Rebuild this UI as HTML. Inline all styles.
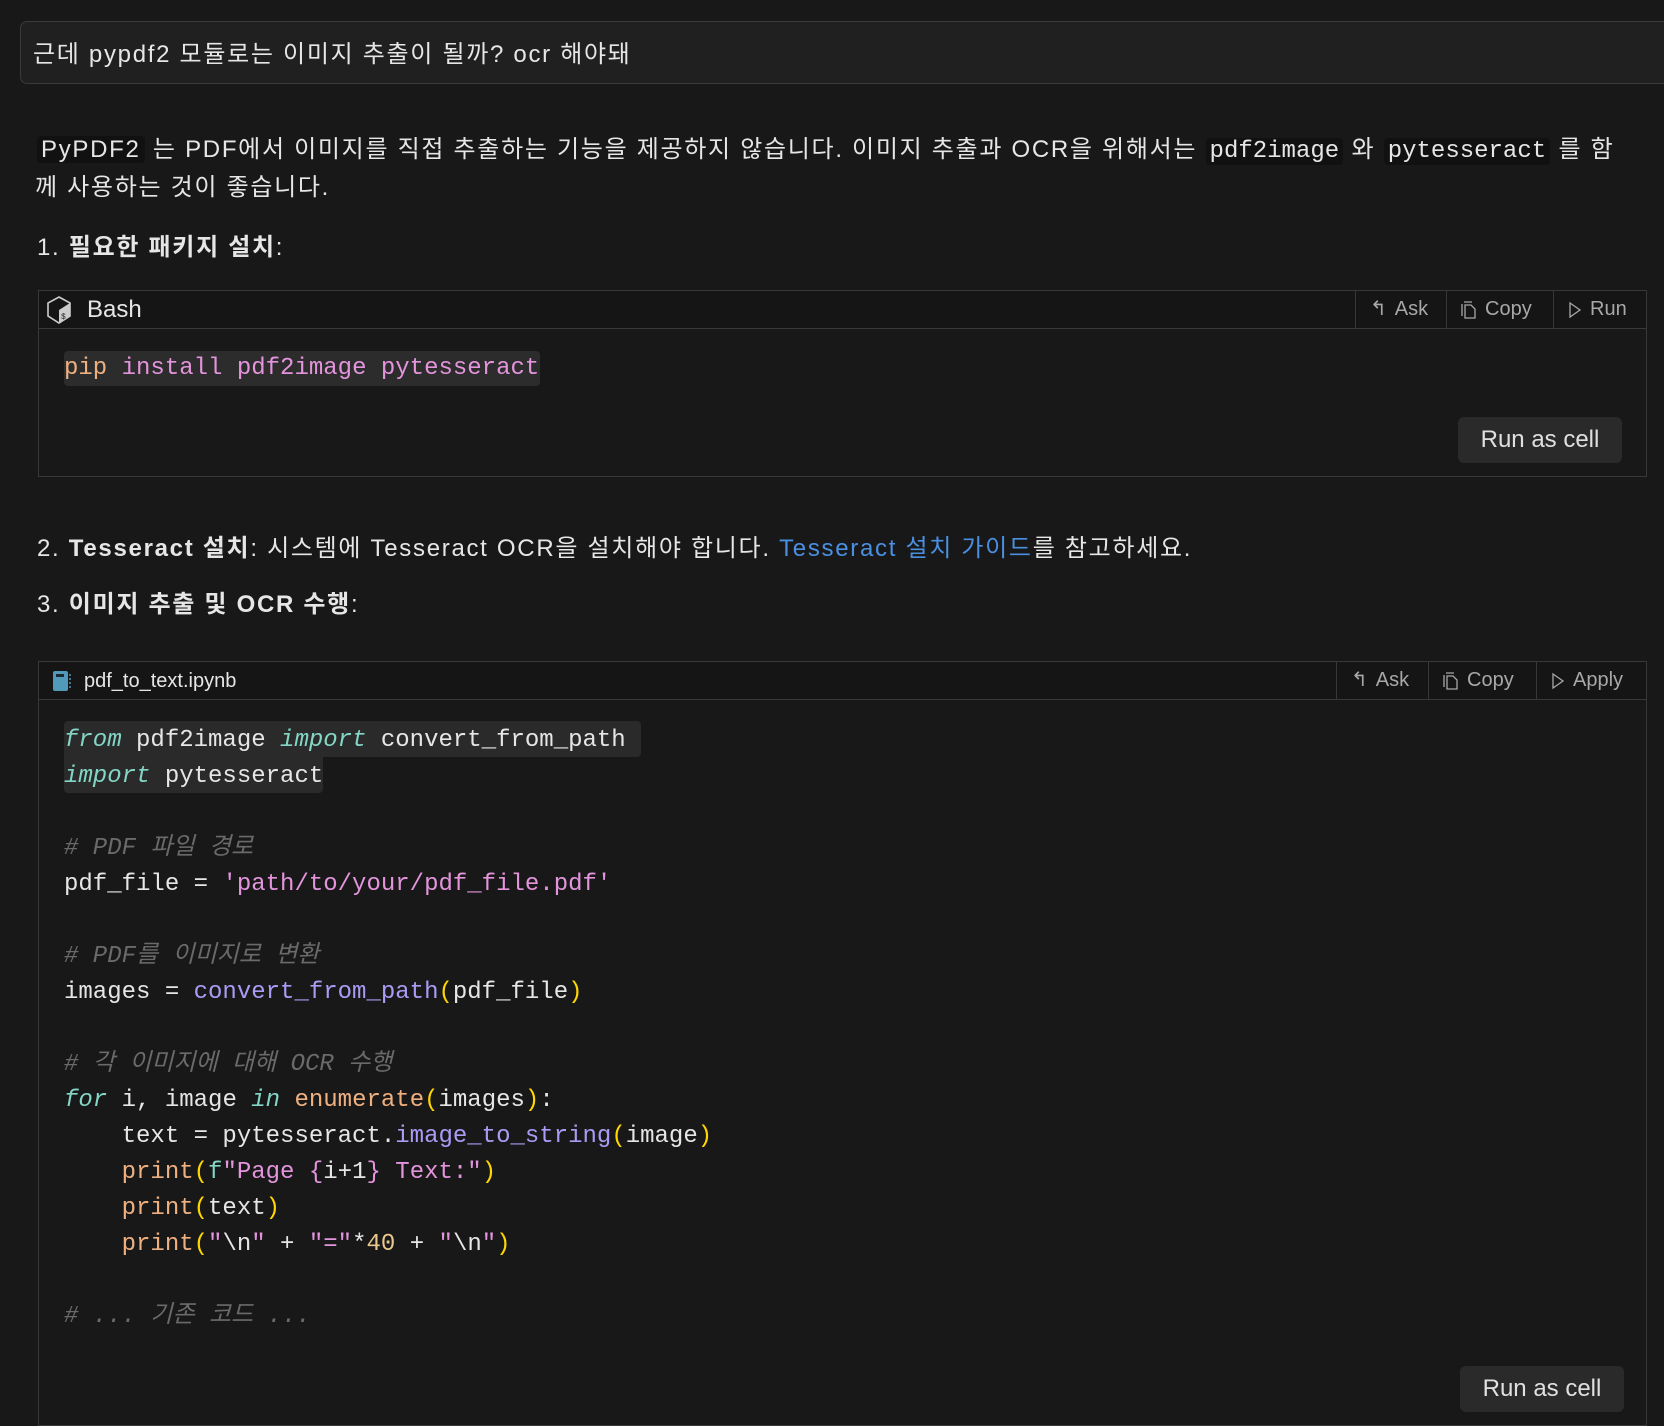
<!DOCTYPE html>
<html><head><meta charset="utf-8"><style>
*{margin:0;padding:0;box-sizing:border-box}
body{width:1664px;height:1426px;background:#181818;color:#e6e6e6;font-family:"Liberation Sans","Noto Sans CJK KR",sans-serif;position:relative;overflow:hidden}
.abs{position:absolute}
.t{font-size:24px;white-space:nowrap;line-height:36px;letter-spacing:1.7px}
.mono{font-family:"Liberation Mono","Noto Sans CJK KR",monospace}
.ic{font-family:"Liberation Mono","Noto Sans CJK KR",monospace;background:#111;padding:0 4px;border-radius:4px;font-size:24px;letter-spacing:0}
.block{position:absolute;left:38px;width:1609px;border:1.5px solid #383838;background:#181818}
.hdr{position:absolute;left:0;right:0;top:0;height:38px;border-bottom:1.5px solid #383838;background:#151515}
.btn{position:absolute;top:0;height:37px;border-left:1.5px solid #383838;color:#a8a8a8;font-size:20px;line-height:37px;display:flex;align-items:center;gap:8px;padding-left:14px}
.rac{position:absolute;background:#2a2a2a;border-radius:6px;color:#e0e0e0;font-size:24px;text-align:center;line-height:46px;width:164px;height:46px}
.code{position:absolute;left:25px;font-size:24px;line-height:36px;white-space:pre;font-family:"Liberation Mono","Noto Sans CJK KR",monospace;color:#e6e6e6}
.k{color:#83d6c5;font-style:italic}.c{color:#6a6a6a;font-style:italic}.s{color:#e394dc}.f{color:#efb080}.p{color:#aa9bf5}.y{color:#ffd700}.n{color:#ebc88d}
</style></head><body>
<div class="abs" style="left:20px;top:21px;width:1660px;height:63px;border:1.5px solid #3a3a3a;border-radius:7px;background:#202020"></div>
<div class="abs t" style="left:33px;top:37px">근데 pypdf2 모듈로는 이미지 추출이 될까? ocr 해야돼</div>

<div class="abs t" style="left:37px;top:132px"><span style="background:#111;padding:0 4px;border-radius:4px">PyPDF2</span> 는 PDF에서 이미지를 직접 추출하는 기능을 제공하지 않습니다. 이미지 추출과 OCR을 위해서는 <span class="ic">pdf2image</span> 와 <span class="ic">pytesseract</span> 를 함</div>
<div class="abs t" style="left:35px;top:170px">께 사용하는 것이 좋습니다.</div>
<div class="abs t" style="left:37px;top:230px">1. <b>필요한 패키지 설치</b>:</div>

<div class="block" style="top:290px;height:187px">
 <div class="hdr">
  <svg class="abs" style="left:6px;top:4px" width="28" height="30" viewBox="0 0 28 30"><path d="M14 2L25 8V21L14 28L3 21V8Z" fill="none" stroke="#ccc" stroke-width="1.6"/><path d="M14 15L25 8V21L14 28Z" fill="#ccc"/><text x="16" y="24" font-size="8" fill="#222" font-family="Liberation Mono">$_</text></svg>
  <div class="abs" style="left:48px;top:0;font-size:24px;line-height:38px;color:#e6e6e6">Bash</div>
  <div class="btn" style="left:1316px;width:92px"><span>↰</span>Ask</div>
  <div class="btn" style="left:1407px;width:108px"><svg width="16" height="18" viewBox="0 0 16 18"><path d="M3 1H11M1 3V15" stroke="#a8a8a8" fill="none" stroke-width="1.3"/><path d="M4 4H10L14 8V17H4Z" stroke="#a8a8a8" fill="none" stroke-width="1.3"/></svg>Copy</div>
  <div class="btn" style="left:1514px;width:95px"><svg width="14" height="18" viewBox="0 0 14 18"><path d="M2 2L12 9L2 16Z" stroke="#a8a8a8" fill="none" stroke-width="1.3"/></svg>Run</div>
 </div>
 <div class="abs" style="left:25px;top:60px;width:476px;height:35px;background:#2c2c2c;border-radius:4px"></div>
 <div class="code" style="top:60px;line-height:36px"><span class="f">pip</span> <span class="s">install pdf2image pytesseract</span></div>
 <div class="rac" style="left:1419px;top:126px">Run as cell</div>
</div>

<div class="abs t" style="left:37px;top:531px">2. <b>Tesseract 설치</b>: 시스템에 Tesseract OCR을 설치해야 합니다. <span style="color:#4a8fe0">Tesseract 설치 가이드</span>를 참고하세요.</div>
<div class="abs t" style="left:37px;top:587px">3. <b>이미지 추출 및 OCR 수행</b>:</div>

<div class="block" style="top:661px;height:765px">
 <div class="hdr">
  <svg class="abs" style="left:13px;top:8px" width="20" height="22" viewBox="0 0 20 22"><rect x="1" y="1" width="15" height="20" rx="2" fill="#519aba"/><rect x="4" y="4" width="8" height="3" fill="#1a2a33"/><path d="M17 5h2M17 9h2M17 13h2M17 17h2" stroke="#519aba" stroke-width="1.5"/></svg>
  <div class="abs" style="left:45px;top:0;font-size:20px;line-height:38px;color:#e6e6e6">pdf_to_text.ipynb</div>
  <div class="btn" style="left:1297px;width:93px"><span>↰</span>Ask</div>
  <div class="btn" style="left:1389px;width:109px"><svg width="16" height="18" viewBox="0 0 16 18"><path d="M3 1H11M1 3V15" stroke="#a8a8a8" fill="none" stroke-width="1.3"/><path d="M4 4H10L14 8V17H4Z" stroke="#a8a8a8" fill="none" stroke-width="1.3"/></svg>Copy</div>
  <div class="btn" style="left:1497px;width:112px"><svg width="14" height="18" viewBox="0 0 14 18"><path d="M2 2L12 9L2 16Z" stroke="#a8a8a8" fill="none" stroke-width="1.3"/></svg>Apply</div>
 </div>
 <div class="abs" style="left:25px;top:59px;width:577px;height:36px;background:#2a2a2a;border-radius:4px"></div>
 <div class="abs" style="left:25px;top:93px;width:259px;height:38px;background:#2a2a2a;border-radius:0 0 4px 4px"></div>
 <div class="code" style="top:61px"><span class="k">from</span> pdf2image <span class="k">import</span> convert_from_path
<span class="k">import</span> pytesseract

<span class="c"># PDF 파일 경로</span>
pdf_file = <span class="s">'path/to/your/pdf_file.pdf'</span>

<span class="c"># PDF를 이미지로 변환</span>
images = <span class="p">convert_from_path</span><span class="y">(</span>pdf_file<span class="y">)</span>

<span class="c"># 각 이미지에 대해 OCR 수행</span>
<span class="k">for</span> i, image <span class="k">in</span> <span class="f">enumerate</span><span class="y">(</span>images<span class="y">)</span>:
    text = pytesseract.<span class="p">image_to_string</span><span class="y">(</span>image<span class="y">)</span>
    <span class="f">print</span><span class="y">(</span><span class="k" style="font-style:normal">f</span><span class="s">"Page {</span>i+1<span class="s">} Text:"</span><span class="y">)</span>
    <span class="f">print</span><span class="y">(</span>text<span class="y">)</span>
    <span class="f">print</span><span class="y">(</span><span class="s">"</span>\n<span class="s">"</span> + <span class="s">"="</span>*<span class="n">40</span> + <span class="s">"</span>\n<span class="s">"</span><span class="y">)</span>

<span class="c"># ... 기존 코드 ...</span></div>
 <div class="rac" style="left:1421px;top:704px">Run as cell</div>
</div>
</body></html>
